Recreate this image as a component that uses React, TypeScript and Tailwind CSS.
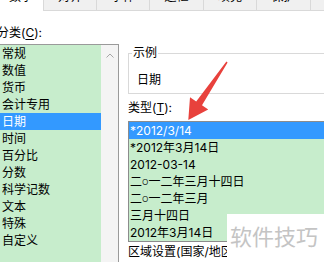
const tabs = [
  { label: '对齐', width: 'w-[53px]' },
  { label: '字体', width: 'w-[53px]' },
  { label: '边框', width: 'w-[54px]' },
  { label: '填充', width: 'w-[53px]' },
  { label: '保护', width: 'w-[54px]' },
];

const categories = ['常规', '数值', '货币', '会计专用', '日期', '时间', '百分比', '分数', '科学记数', '文本', '特殊', '自定义'];

const types = ['*2012/3/14', '*2012年3月14日', '2012-03-14', '二○一二年三月十四日', '二○一二年三月', '三月十四日', '2012年3月14日'];

// the small ring in 二○一二 is drawn much smaller than a full-width glyph
function withRing(text: string) {
  const parts = text.split('○');
  return parts.map((p, i) => (
    <span key={i}>
      {i > 0 && <span className="align-middle text-[7px]">○</span>}
      {p}
    </span>
  ));
}

function Row({ text, selected, pad }: { text: string; selected?: boolean; pad: string }) {
  return (
    <div
      className={
        selected
          ? `h-[17px] whitespace-nowrap bg-[#3399ff] leading-[17px] text-white ${pad}`
          : `h-[17px] whitespace-nowrap leading-[17px] ${pad}`
      }
    >
      {withRing(text)}
    </div>
  );
}

export default function App() {
  return (
    <div className="relative h-[262px] w-[324px] overflow-hidden bg-white font-['Inter','Noto_Sans_CJK_SC',sans-serif] text-[12px] text-black">
      {/* tab strip, top half is out of frame */}
      <div className="flex h-[11px] bg-[#f0f0f0]">
        <div className="h-[11px] w-[44px] shrink-0 border-r border-[#d9d9d9] bg-white">
          <div className="h-[8px] w-[39px] border-b border-r border-dotted border-[#555]">
            <div className="-mt-[10px] pr-[5px] text-right leading-[14px]">数字</div>
          </div>
        </div>
        {tabs.map((t) => (
          <div key={t.label} className={`h-[11px] shrink-0 overflow-hidden border-b border-r border-[#d9d9d9] ${t.width}`}>
            <div className="-mt-[10px] text-center leading-[14px]">{t.label}</div>
          </div>
        ))}
        <div className="h-[11px] flex-1 border-b border-[#d9d9d9]" />
      </div>

      <div className="flex items-start">
        {/* left column */}
        <div className="w-[118px] shrink-0">
          <div className="-ml-[3px] mt-[15px] leading-[14px]">
            分类(<span className="underline underline-offset-2">C</span>):
          </div>
          <div className="-ml-[1px] mt-[4px] flex h-[240px] w-[120px] border border-[#9a9a9a]">
            <div className="flex-1 bg-[#c7edcc]">
              {categories.map((c) => (
                <Row key={c} text={c} selected={c === '日期'} pad="pl-[2px]" />
              ))}
            </div>
            <div className="flex w-[17px] justify-center bg-[#f4f4f4]">
              <svg width="8" height="5" viewBox="0 0 8 5" className="mt-[8px]">
                <path d="M0.5 4.5 L4 1 L7.5 4.5" fill="none" stroke="#a6a6a6" strokeWidth="1" />
              </svg>
            </div>
          </div>
        </div>

        {/* right column */}
        <div className="ml-[10px] w-[230px] shrink-0">
          <fieldset className="mt-[35px] w-[230px] border border-[#d9d9d9] pb-[6px]">
            <legend className="ml-[3px] px-[1px] leading-[14px]">示例</legend>
            <div className="mt-[13px] pl-[8px] leading-[14px]">日期</div>
          </fieldset>
          <div className="mt-[7px] leading-[14px]">
            类型(<span className="underline underline-offset-2">T</span>):
          </div>
          <div className="mt-[6px] w-[230px] border border-[#8c8c8c] bg-[#c7edcc]">
            {types.map((t, i) => (
              <Row key={t} text={t} selected={i === 0} pad="pl-[1px]" />
            ))}
          </div>
          <div className="mt-[3px] whitespace-nowrap leading-[14px]">
            区域设置(国家/地区)(<span className="underline underline-offset-2">L</span>):
          </div>
        </div>
      </div>

      {/* watermark */}
      <div className="absolute bottom-0 left-[227px] right-0 top-[214px] bg-white pl-[3px] pt-[8px] text-[22px] leading-[30px] text-[#c4c4c4]">
        软件技巧
      </div>

      {/* red annotation arrow */}
      <svg className="pointer-events-none absolute inset-0" width="324" height="262" viewBox="0 0 324 262">
        <polygon
          points="227.6,62.4 202,105.3 208.2,109.5 188.3,120 190,97.3 196.2,101.4 226.4,61.6"
          fill="#e8413c"
        />
      </svg>
    </div>
  );
}
